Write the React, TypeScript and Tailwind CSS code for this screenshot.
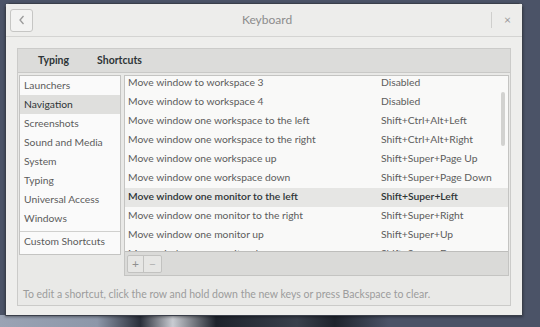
const categories = [
  'Launchers',
  'Navigation',
  'Screenshots',
  'Sound and Media',
  'System',
  'Typing',
  'Universal Access',
  'Windows',
];

const shortcuts = [
  ['Move window to workspace 3', 'Disabled'],
  ['Move window to workspace 4', 'Disabled'],
  ['Move window one workspace to the left', 'Shift+Ctrl+Alt+Left'],
  ['Move window one workspace to the right', 'Shift+Ctrl+Alt+Right'],
  ['Move window one workspace up', 'Shift+Super+Page Up'],
  ['Move window one workspace down', 'Shift+Super+Page Down'],
  ['Move window one monitor to the left', 'Shift+Super+Left'],
  ['Move window one monitor to the right', 'Shift+Super+Right'],
  ['Move window one monitor up', 'Shift+Super+Up'],
  ['Move window one monitor down', 'Shift+Super+Down'],
];

export default function App() {
  return (
    <div
      className="relative h-[327px] w-[540px] overflow-hidden bg-[#4b5367] pl-[5px] pt-[3px] text-[10.3px]"
      style={{ fontFamily: 'Lato, "Liberation Sans", sans-serif' }}>
      {/* desktop photo peeking below the window */}
      <div className="absolute bottom-0 left-0 h-[12px] w-full bg-[linear-gradient(90deg,#9aa3b4_0%,#8d97a9_18%,#2a2f3a_26%,#c9ccd2_32%,#1e232c_40%,#3a404c_55%,#1f242d_62%,#4b5367_72%,#4b5367_100%)]" />

      <div className="relative flex h-[313px] w-[518px] flex-col rounded-t-[4px] border border-[#3a3f4a] bg-[#eeeeec] shadow-[0_1px_3px_rgba(0,0,0,0.4)]">
        {/* header bar */}
        <div className="flex h-[33px] items-center border-b border-[#d4d4d2] bg-[#ededeb] px-[4px]">
          <div className="flex h-[23px] w-[23px] items-center justify-center rounded-[3px] border border-[#c6c6c4] bg-[#f3f3f2]">
            <svg width="8" height="10" viewBox="0 0 8 10">
              <path d="M5.5 1 L2 5 L5.5 9" fill="none" stroke="#9a9a9a" strokeWidth="1.3" />
            </svg>
          </div>
          <div className="flex-1 pl-[10px] text-center text-[12px] text-[#8c8c8c]">Keyboard</div>
          <div className="mr-[12px] h-[16px] w-px bg-[#cfcfcd]" />
          <div className="mr-[7px] text-[12px] leading-none text-[#9a9a9a]">×</div>
        </div>

        {/* notebook frame */}
        <div className="mx-[11px] mt-[11px] flex h-[258px] flex-col border border-[#cbcbc9] bg-[#e9e9e7]">
          <div className="flex h-[24px] items-center gap-[28px] border-b border-[#c9c9c7] bg-[#dcdcda] pl-[20px] text-[10.5px] font-bold text-[#2e3436]">
            <span>Typing</span>
            <span>Shortcuts</span>
          </div>

          <div className="flex gap-[3px] px-[1px] pt-[2px]">
            {/* categories */}
            <div className="h-[180px] w-[102px] border border-[#c4c4c2] bg-[#fafafa]">
              {categories.map((c) => (
                <div
                  key={c}
                  className={
                    c === 'Navigation'
                      ? 'flex h-[19px] items-center bg-[#dfdfdd] pl-[4px] text-[#2e3436]'
                      : 'flex h-[19px] items-center pl-[4px] text-[#5c5c5c]'
                  }>
                  {c}
                </div>
              ))}
              <div className="mt-[3px] border-t border-[#d0d0ce]" />
              <div className="flex h-[19px] items-center pl-[4px] text-[#5c5c5c]">Custom Shortcuts</div>
            </div>

            {/* shortcuts */}
            <div className="flex h-[201px] w-[385px] flex-col border border-[#c4c4c2] bg-[#f9f9f8]">
              <div className="relative h-[176px] overflow-hidden border-b border-[#bdbdbb]">
                <div className="-mt-[2.5px]">
                  {shortcuts.map(([name, keys], i) => (
                    <div
                      key={name}
                      className={
                        i === 6
                          ? 'flex h-[19px] items-center bg-[#e6e6e4] pl-[3px] font-semibold text-[#2e3436]'
                          : 'flex h-[19px] items-center pl-[3px] text-[#5c5c5c]'
                      }>
                      <span className="w-[253px]">{name}</span>
                      <span>{keys}</span>
                    </div>
                  ))}
                </div>
                <div className="absolute right-[3px] top-[16px] h-[54px] w-[4px] rounded-full bg-[#d2d2d0]" />
              </div>
              <div className="flex flex-1 items-center bg-[#dadad8] pl-[2px]">
                <div className="flex h-[18px] overflow-hidden rounded-[2px] border border-[#c2c2c0] bg-[#e6e6e4] text-[#8f8f8f]">
                  <div className="flex w-[16px] items-center justify-center border-r border-[#c2c2c0] text-[12px] leading-none">+</div>
                  <div className="flex w-[17px] items-center justify-center text-[12px] leading-none text-[#b0b0b0]">−</div>
                </div>
              </div>
            </div>
          </div>

          <div className="mt-[11px] pl-[5px] text-[10.5px] text-[#9c9c9c]">
            To edit a shortcut, click the row and hold down the new keys or press Backspace to clear.
          </div>
        </div>
      </div>
    </div>
  );
}
